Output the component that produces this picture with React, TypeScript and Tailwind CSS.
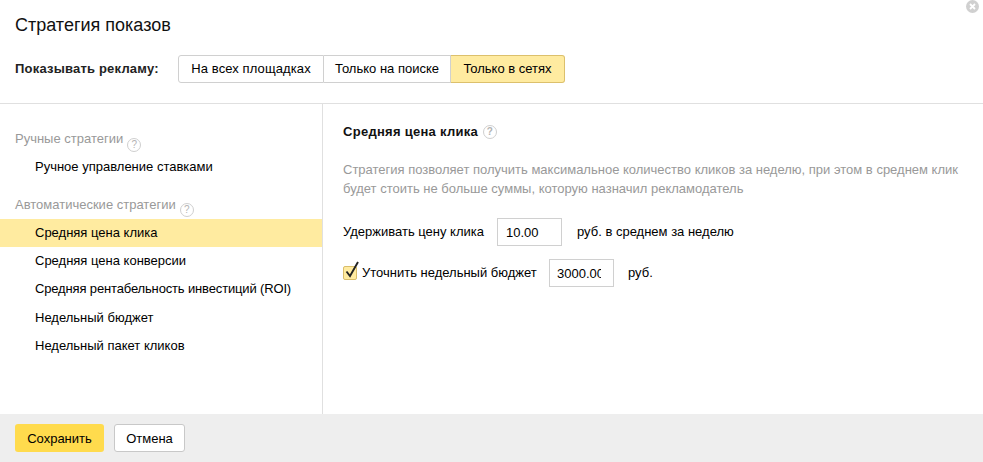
import { useState } from "react";

const Help = ({ className = "" }: { className?: string }) => (
  <span
    className={`inline-flex h-[14px] w-[14px] shrink-0 items-center justify-center rounded-full border border-[#cfcfcf] text-[10px] leading-none text-[#b4b4b4] ${className}`}
  >
    ?
  </span>
);

const tabs = ["На всех площадках", "Только на поиске", "Только в сетях"];
const autoItems = [
  "Средняя цена клика",
  "Средняя цена конверсии",
  "Средняя рентабельность инвестиций (ROI)",
  "Недельный бюджет",
  "Недельный пакет кликов",
];

export default function App() {
  const [checked, setChecked] = useState(true);

  return (
    <div className="relative flex h-[462px] w-[983px] flex-col overflow-hidden bg-white font-['Liberation_Sans',Arial,sans-serif] text-[13px] text-black">
      {/* Close */}
      <svg className="absolute right-[4px] top-[0px]" width="13" height="13" viewBox="0 0 13 13">
        <circle cx="6.5" cy="6.5" r="6.5" fill="#d0d0d0" />
        <path d="M4 4l5 5M9 4l-5 5" stroke="#fff" strokeWidth="1.8" />
      </svg>

      {/* Header */}
      <div className="h-[104px] shrink-0 border-b border-[#e0e0e0] px-[15px]">
        <h1 className="pt-[14px] text-[18px] leading-[22px] text-[#111]">Стратегия показов</h1>
        <div className="mt-[19px] flex items-center">
          <span className="w-[163px] font-bold tracking-[0.2px] text-[#222]">Показывать рекламу:</span>
          <div className="flex h-[28px]">
            {tabs.map((t, i) => (
              <button
                key={t}
                className={
                  i === 0
                    ? "w-[146px] rounded-l-[3px] border border-[#d0d0d0] bg-white tracking-[0.1px]"
                    : i === 1
                      ? "w-[127px] border-y border-r border-[#d0d0d0] bg-white"
                      : "w-[114px] rounded-r-[3px] border border-l-0 border-[#dcc06c] bg-[#ffeba0]"
                }
              >
                {t}
              </button>
            ))}
          </div>
        </div>
      </div>

      {/* Body */}
      <div className="flex min-h-0 flex-1">
        <div className="w-[323px] shrink-0 border-r border-[#e0e0e0] pt-[25px]">
          <div className="flex h-[20px] items-center px-[15px] text-[#999]">
            Ручные стратегии
            <Help className="ml-[4px] mt-[11px]" />
          </div>
          <div className="mt-[4px] flex h-[28px] items-center pl-[35px]">Ручное управление ставками</div>
          <div className="mt-[14px] flex h-[20px] items-center px-[15px] text-[#999]">
            Автоматические стратегии
            <Help className="ml-[4px] mt-[10px]" />
          </div>
          <div className="mt-[4px]">
            {autoItems.map((t, i) => (
              <div
                key={t}
                className={`flex h-[28.2px] items-center pl-[35px] ${i === 0 ? "bg-[#ffeba0]" : ""} ${i === 1 ? "pb-[2px]" : ""} ${i === 2 ? "pb-[2px] tracking-[-0.15px]" : ""}`}
              >
                {t}
              </div>
            ))}
          </div>
        </div>

        <div className="flex-1 pl-[20px] pt-[20px]">
          <div className="flex h-[16px] items-center font-bold tracking-[0.28px] text-[#111]">
            Средняя цена клика
            <Help className="ml-[5px]" />
          </div>
          <p className="mt-[20px] w-[625px] leading-[19px] text-[#999]">
            Стратегия позволяет получить максимальное количество кликов за неделю, при этом в среднем клик будет стоить не больше суммы, которую назначил рекламодатель
          </p>
          <div className="mt-[20px] flex h-[28px] items-center">
            <span className="w-[154px]">Удерживать цену клика</span>
            <input
              defaultValue="10.00"
              className="h-[28px] w-[65px] border border-[#d0d0d0] pl-[8px] pr-[12px] text-[13px] outline-none"
            />
            <span className="ml-[15px]">руб. в среднем за неделю</span>
          </div>
          <div className="mt-[13px] flex h-[28px] items-center">
            <button
              onClick={() => setChecked(!checked)}
              className="relative h-[14px] w-[14px] rounded-[2px] border border-[#d9bd6a] bg-[#ffeba0]"
            >
              {checked && (
                <svg className="absolute left-[0px] top-[-6px]" width="17" height="18" viewBox="0 0 17 18">
                  <path d="M2.5 10.5l3.5 4.5 8-14" fill="none" stroke="#222" strokeWidth="1.9" />
                </svg>
              )}
            </button>
            <span className="ml-[5px] w-[187px]">Уточнить недельный бюджет</span>
            <input
              defaultValue="3000.00"
              className="h-[28px] w-[65px] border border-[#d0d0d0] pl-[7px] pr-[12px] text-[13px] outline-none"
            />
            <span className="ml-[14px]">руб.</span>
          </div>
        </div>
      </div>

      {/* Footer */}
      <div className="flex h-[48px] shrink-0 items-center gap-[10px] bg-[#eeeeee] px-[15px]">
        <button className="h-[28px] w-[89px] rounded-[3px] bg-[#ffdb4d] pt-[1px]">Сохранить</button>
        <button className="h-[28px] w-[71px] rounded-[3px] border border-[#c8c8c8] bg-white pt-[1px]">Отмена</button>
      </div>
    </div>
  );
}
